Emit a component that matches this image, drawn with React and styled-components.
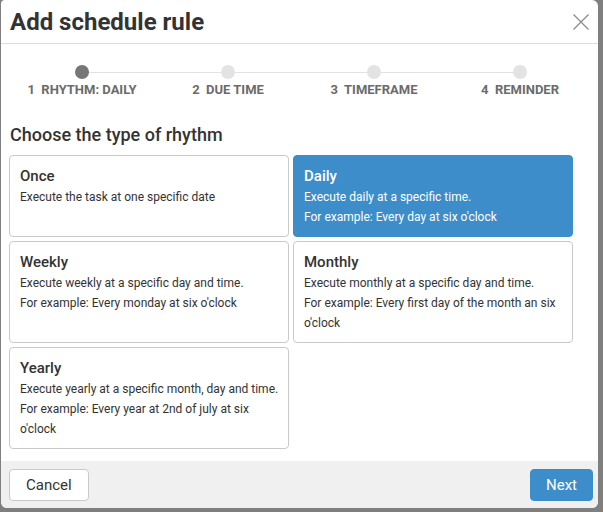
import React, { useState } from "react";
import styled, { createGlobalStyle } from "styled-components";

const GlobalStyle = createGlobalStyle`
  html, body {
    margin: 0;
    padding: 0;
    background: #7f7f7f;
    font-family: Roboto, "Liberation Sans", sans-serif;
  }
  * { box-sizing: border-box; }
`;

const Backdrop = styled.div`
  width: 603px;
  height: 512px;
  padding: 0 5px 4px 1px;
`;

const Dialog = styled.div`
  height: 100%;
  background: #ffffff;
  border-radius: 4px 6px 6px 6px;
  display: flex;
  flex-direction: column;
  overflow: hidden;
`;

const Header = styled.div`
  flex-shrink: 0;
  height: 44px;
  border-bottom: 1px solid #dcdcdc;
  display: flex;
  align-items: center;
  justify-content: space-between;
  padding: 0 8px 0 9px;
`;

const Title = styled.h1`
  margin: 0;
  font-size: 24px;
  font-weight: 700;
  color: #333333;
`;

const CloseButton = styled.button`
  border: 0;
  background: none;
  padding: 0;
  width: 18px;
  height: 18px;
  cursor: pointer;
  display: flex;
`;

const Body = styled.div`
  flex: 1;
  min-height: 0;
  padding: 21px 8px 0 8px;
`;

const Stepper = styled.div`
  display: grid;
  grid-template-columns: repeat(4, 146px);
`;

const Step = styled.div`
  position: relative;
  display: flex;
  flex-direction: column;
  align-items: center;
  gap: 3px;

  &:not(:last-child)::after {
    content: "";
    position: absolute;
    top: 7px;
    left: 50%;
    width: 100%;
    height: 1px;
    background: #e2e2e2;
  }
`;

const Dot = styled.span`
  position: relative;
  z-index: 1;
  width: 14px;
  height: 14px;
  border-radius: 50%;
  background: ${(p) => (p.$active ? "#777777" : "#e3e3e3")};
`;

const StepLabel = styled.span`
  font-size: 13px;
  line-height: 16px;
  font-weight: 700;
  color: #6b6b6b;
  text-transform: uppercase;
  white-space: pre;
`;

const SectionTitle = styled.h2`
  margin: 26px 0 9px 1px;
  font-size: 18px;
  line-height: 22px;
  font-weight: 500;
  color: #333333;
`;

const Grid = styled.div`
  display: grid;
  grid-template-columns: repeat(2, 280px);
  gap: 4px;
`;

const Card = styled.button`
  text-align: left;
  font-family: inherit;
  border: 1px solid ${(p) => (p.$selected ? "#3d8dca" : "#c9c9c9")};
  border-radius: 4px;
  background: ${(p) => (p.$selected ? "#3d8dca" : "#ffffff")};
  color: ${(p) => (p.$selected ? "#ffffff" : "#333333")};
  padding: 9px 4px 9px 10px;
  display: flex;
  flex-direction: column;
  justify-content: flex-start;
  cursor: pointer;
`;

const CardTitle = styled.span`
  font-size: 15px;
  line-height: 22px;
  font-weight: 500;
`;

const CardText = styled.span`
  font-size: 12px;
  line-height: 20px;
  padding-right: 4px;
`;

const Footer = styled.div`
  flex-shrink: 0;
  height: 47px;
  background: #f0f0f0;
  display: flex;
  align-items: center;
  justify-content: space-between;
  padding: 0 5px 0 8px;
`;

const Button = styled.button`
  height: 32px;
  padding: 0 ${(p) => (p.$primary ? "15px" : "16px")};
  font-family: inherit;
  font-size: 15px;
  border-radius: 4px;
  border: 1px solid ${(p) => (p.$primary ? "#3d8dca" : "#c9c9c9")};
  background: ${(p) => (p.$primary ? "#3d8dca" : "#ffffff")};
  color: ${(p) => (p.$primary ? "#ffffff" : "#333333")};
  cursor: pointer;
`;

const steps = ["1  Rhythm: Daily", "2  Due time", "3  Timeframe", "4  Reminder"];

const rhythms = [
  { id: "once", title: "Once", lines: ["Execute the task at one specific date"] },
  {
    id: "daily",
    title: "Daily",
    lines: ["Execute daily at a specific time.", "For example: Every day at six o'clock"],
  },
  {
    id: "weekly",
    title: "Weekly",
    lines: ["Execute weekly at a specific day and time.", "For example: Every monday at six o'clock"],
  },
  {
    id: "monthly",
    title: "Monthly",
    lines: [
      "Execute monthly at a specific day and time.",
      "For example: Every first day of the month an six o'clock",
    ],
  },
  {
    id: "yearly",
    title: "Yearly",
    lines: [
      "Execute yearly at a specific month, day and time.",
      "For example: Every year at 2nd of july at six o'clock",
    ],
  },
];

const App = () => {
  const [selected, setSelected] = useState("daily");

  return (
    <>
      <GlobalStyle />
      <Backdrop>
        <Dialog>
          <Header>
            <Title>Add schedule rule</Title>
            <CloseButton aria-label="Close">
              <svg width="18" height="18" viewBox="0 0 18 18">
                <path d="M1.5 1.5 L16.5 16.5 M16.5 1.5 L1.5 16.5" stroke="#8a8a8a" strokeWidth="1.2" fill="none" />
              </svg>
            </CloseButton>
          </Header>
          <Body>
            <Stepper>
              {steps.map((s, i) => (
                <Step key={s}>
                  <Dot $active={i === 0} />
                  <StepLabel>{s}</StepLabel>
                </Step>
              ))}
            </Stepper>
            <SectionTitle>Choose the type of rhythm</SectionTitle>
            <Grid>
              {rhythms.map((r) => (
                <Card key={r.id} $selected={selected === r.id} onClick={() => setSelected(r.id)}>
                  <CardTitle>{r.title}</CardTitle>
                  {r.lines.map((l) => (
                    <CardText key={l}>{l}</CardText>
                  ))}
                </Card>
              ))}
            </Grid>
          </Body>
          <Footer>
            <Button>Cancel</Button>
            <Button $primary>Next</Button>
          </Footer>
        </Dialog>
      </Backdrop>
    </>
  );
};

export default App;
